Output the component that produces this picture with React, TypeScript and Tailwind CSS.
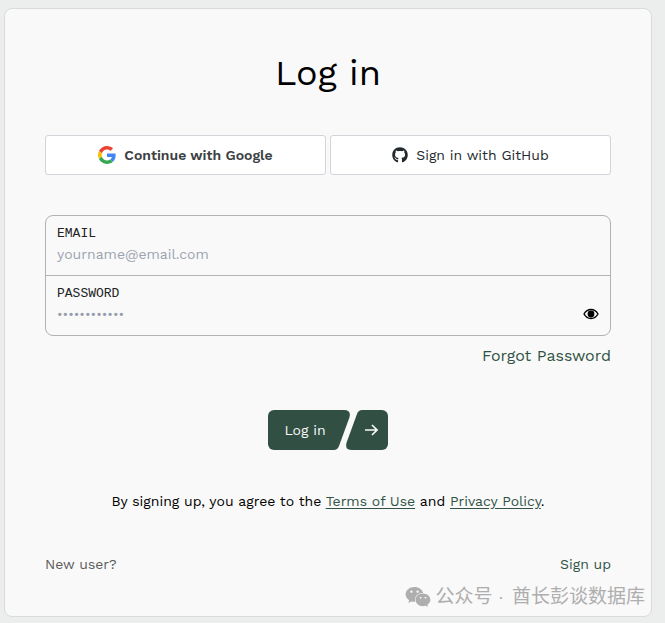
import React, { useState } from "react"
import { FaGithub, FaWeixin } from "react-icons/fa"

function GoogleLogo() {
    return (
        <svg className="w-[18px] h-[18px]" viewBox="0 0 48 48" aria-hidden="true">
            <path fill="#EA4335" d="M24 9.5c3.54 0 6.71 1.22 9.21 3.6l6.85-6.85C35.9 2.38 30.47 0 24 0 14.62 0 6.51 5.38 2.56 13.22l7.98 6.19C12.43 13.72 17.74 9.5 24 9.5z" />
            <path fill="#4285F4" d="M46.98 24.55c0-1.57-.15-3.09-.38-4.55H24v9.02h12.94c-.58 2.96-2.26 5.48-4.78 7.18l7.73 6c4.51-4.18 7.09-10.36 7.09-17.65z" />
            <path fill="#FBBC05" d="M10.53 28.59c-.48-1.45-.76-2.99-.76-4.59s.27-3.14.76-4.59l-7.98-6.19C.92 16.46 0 20.12 0 24c0 3.88.92 7.54 2.56 10.78l7.97-6.19z" />
            <path fill="#34A853" d="M24 48c6.48 0 11.93-2.13 15.89-5.81l-7.73-6c-2.15 1.45-4.92 2.3-8.16 2.3-6.26 0-11.57-4.22-13.47-9.91l-7.98 6.19C6.51 42.62 14.62 48 24 48z" />
        </svg>
    )
}

function EyeIcon() {
    return (
        <svg className="w-4 h-4" viewBox="0 0 16 16" aria-hidden="true">
            <path d="M1 8C2.7 5 5.1 3.5 8 3.5S13.3 5 15 8c-1.7 3-4.1 4.5-7 4.5S2.7 11 1 8z" fill="none" stroke="currentColor" strokeWidth="1.4" strokeLinejoin="round" />
            <circle cx="8" cy="8" r="3.4" fill="currentColor" />
        </svg>
    )
}

// Slanted edge shared by both halves of the submit button
function SlantedEdge({ className }: { className?: string }) {
    return (
        <svg className={className} width="16" height="40" viewBox="0 0 16 40" fill="currentColor" aria-hidden="true">
            <path d="M0 0H10Q17.5 0 15.4 7.5L5 36Q3.5 40 0 40Z" />
        </svg>
    )
}

export default function App() {
    const [showPassword, setShowPassword] = useState(false)

    return (
        <div className="min-h-screen bg-[#ebeeed] pt-2 pb-1.5 pl-1 pr-[13px] font-['Work_Sans',Inter,'Noto_Sans_CJK_SC',sans-serif] text-sm leading-5 text-black">
            <main className="relative rounded-lg border border-[#d8dbda] bg-[#f9f9f9] px-10 pt-10 pb-[42px]">
                <h1 className="text-center text-4xl leading-[48px]">Log in</h1>

                {/* Social buttons */}
                <div className="mt-[38px] grid grid-cols-2 gap-1">
                    <button type="button" className="flex h-10 items-center justify-center gap-2 rounded-[3px] border border-[#d3d4da] bg-white font-semibold text-[#3c4043]">
                        <GoogleLogo />
                        Continue with Google
                    </button>
                    <button type="button" className="flex h-10 items-center justify-center gap-2 rounded-[3px] border border-[#d3d4da] bg-white text-[#24292e]">
                        <FaGithub className="w-4 h-4" />
                        Sign in with GitHub
                    </button>
                </div>

                <form className="mt-10" onSubmit={(e) => e.preventDefault()}>
                    <div className="rounded-lg border border-[#b2b2b2]">
                        <div className="h-[60px] border-b border-[#b2b2b2] px-[11px] pt-2.5">
                            <label htmlFor="email" className="block font-['Liberation_Mono',monospace] text-[13px] leading-4 text-[#222]">EMAIL</label>
                            <input id="email" type="email" placeholder="yourname@email.com" className="block h-6 w-full bg-transparent outline-none placeholder:text-[#9ca3af]" />
                        </div>
                        <div className="h-[59px] px-[11px] pt-2.5">
                            <label htmlFor="password" className="block font-['Liberation_Mono',monospace] text-[13px] leading-4 text-[#222]">PASSWORD</label>
                            <div className="flex items-center">
                                <input id="password" type={showPassword ? "text" : "password"} placeholder="••••••••••••" className="block h-6 min-w-0 flex-1 bg-transparent text-[13px] outline-none placeholder:text-[#949dac]" />
                                <button type="button" aria-label="Show password" onClick={() => setShowPassword(!showPassword)}>
                                    <EyeIcon />
                                </button>
                            </div>
                        </div>
                    </div>

                    <div className="mt-2 text-right text-base leading-6">
                        <a href="#" className="text-[#315345]">Forgot Password</a>
                    </div>

                    <button type="submit" className="mx-auto mt-[42px] flex h-10 text-[#315043]">
                        <span className="flex h-10 items-center rounded-l-md bg-current pl-4">
                            <span className="text-[#f9f9f9]">Log in</span>
                            <span className="w-2" />
                        </span>
                        <SlantedEdge />
                        <SlantedEdge className="-ml-1 rotate-180" />
                        <span className="flex h-10 w-[26px] items-center rounded-r-md bg-current">
                            <svg className="w-4 h-4 text-[#f9f9f9]" viewBox="0 0 16 16" fill="none" stroke="currentColor" strokeWidth="1.6" aria-hidden="true">
                                <path d="M3 8h12M10 3l5 5-5 5" />
                            </svg>
                        </span>
                    </button>
                </form>

                <p className="mt-[41px] text-center">
                    By signing up, you agree to the{" "}
                    <a href="#" className="text-[#315345] underline underline-offset-2">Terms of Use</a> and{" "}
                    <a href="#" className="text-[#315345] underline underline-offset-2">Privacy Policy</a>.
                </p>

                <div className="mt-[43px] flex justify-between">
                    <span className="text-[#5c5c5c]">New user?</span>
                    <a href="#" className="text-[#315345]">Sign up</a>
                </div>

                {/* Watermark */}
                <div className="absolute right-1.5 bottom-[5px] flex items-center gap-1 font-['Liberation_Sans','Noto_Sans_CJK_SC',sans-serif] text-[19px] leading-7 text-[#aeaeae]">
                    <FaWeixin className="w-[26px] h-[26px]" />
                    <span className="flex gap-2">
                        <span>公众号 ·</span>
                        <span>酋长彭谈数据库</span>
                    </span>
                </div>
            </main>
        </div>
    )
}
